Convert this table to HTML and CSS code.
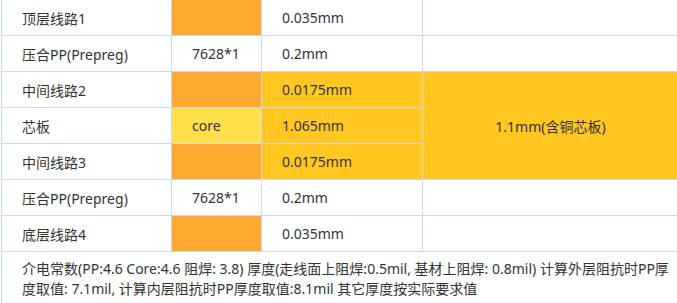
FILE: index.html
```html
<!DOCTYPE html>
<html lang="zh">
<head>
<meta charset="utf-8">
<link rel="stylesheet" href="styles.css">
</head>
<body>
<div class="wrap">
<table class="stack">
  <colgroup>
    <col class="c1"><col class="c2"><col class="c3"><col class="c4">
  </colgroup>
  <tr>
    <td>顶层线路1</td><td class="orange"></td><td>0.035mm</td><td></td>
  </tr>
  <tr>
    <td>压合PP(Prepreg)</td><td>7628*1</td><td>0.2mm</td><td></td>
  </tr>
  <tr>
    <td>中间线路2</td><td class="orange"></td><td class="gold">0.0175mm</td><td class="gold center" rowspan="3">1.1mm(含铜芯板)</td>
  </tr>
  <tr>
    <td>芯板</td><td class="light">core</td><td class="gold">1.065mm</td>
  </tr>
  <tr>
    <td>中间线路3</td><td class="orange"></td><td class="gold">0.0175mm</td>
  </tr>
  <tr>
    <td>压合PP(Prepreg)</td><td>7628*1</td><td>0.2mm</td><td></td>
  </tr>
  <tr>
    <td>底层线路4</td><td class="orange"></td><td>0.035mm</td><td></td>
  </tr>
  <tr>
    <td class="note" colspan="4">介电常数(PP:4.6 Core:4.6 阻焊: 3.8) 厚度(走线面上阻焊:0.5mil, 基材上阻焊: 0.8mil) 计算外层阻抗时PP厚度取值: 7.1mil, 计算内层阻抗时PP厚度取值:8.1mil 其它厚度按实际要求值</td>
  </tr>
</table>
</div>
</body>
</html>
```

FILE: styles.css
```css
html, body {
  margin: 0;
  padding: 0;
  background: #ffffff;
  overflow: hidden;
}
body {
  font-family: "Noto Sans", "Noto Sans CJK SC", sans-serif;
  font-size: 14px;
  color: #333333;
}
.wrap {
  margin: -1px 0 0 1px;
}
.stack {
  border-collapse: collapse;
  table-layout: fixed;
  width: 677px;
}
.c1 { width: 170px; }
.c2 { width: 90px; }
.c3 { width: 161px; }
.c4 { width: 256px; }
.stack td {
  border: 1px solid #c8dbf0;
  height: 35px;
  padding: 0 0 0 20px;
  text-align: left;
  vertical-align: middle;
  white-space: nowrap;
}
.stack td.orange { background: #ffa82d; }
.stack td.gold { background: #ffc720; }
.stack td.light { background: #ffe04b; }
.stack td.center { text-align: center; padding: 0; }
.stack td.note {
  white-space: normal;
  font-size: 14px;
  line-height: 20px;
  padding: 7px 4px 10px 20px;
  vertical-align: top;
}
```
